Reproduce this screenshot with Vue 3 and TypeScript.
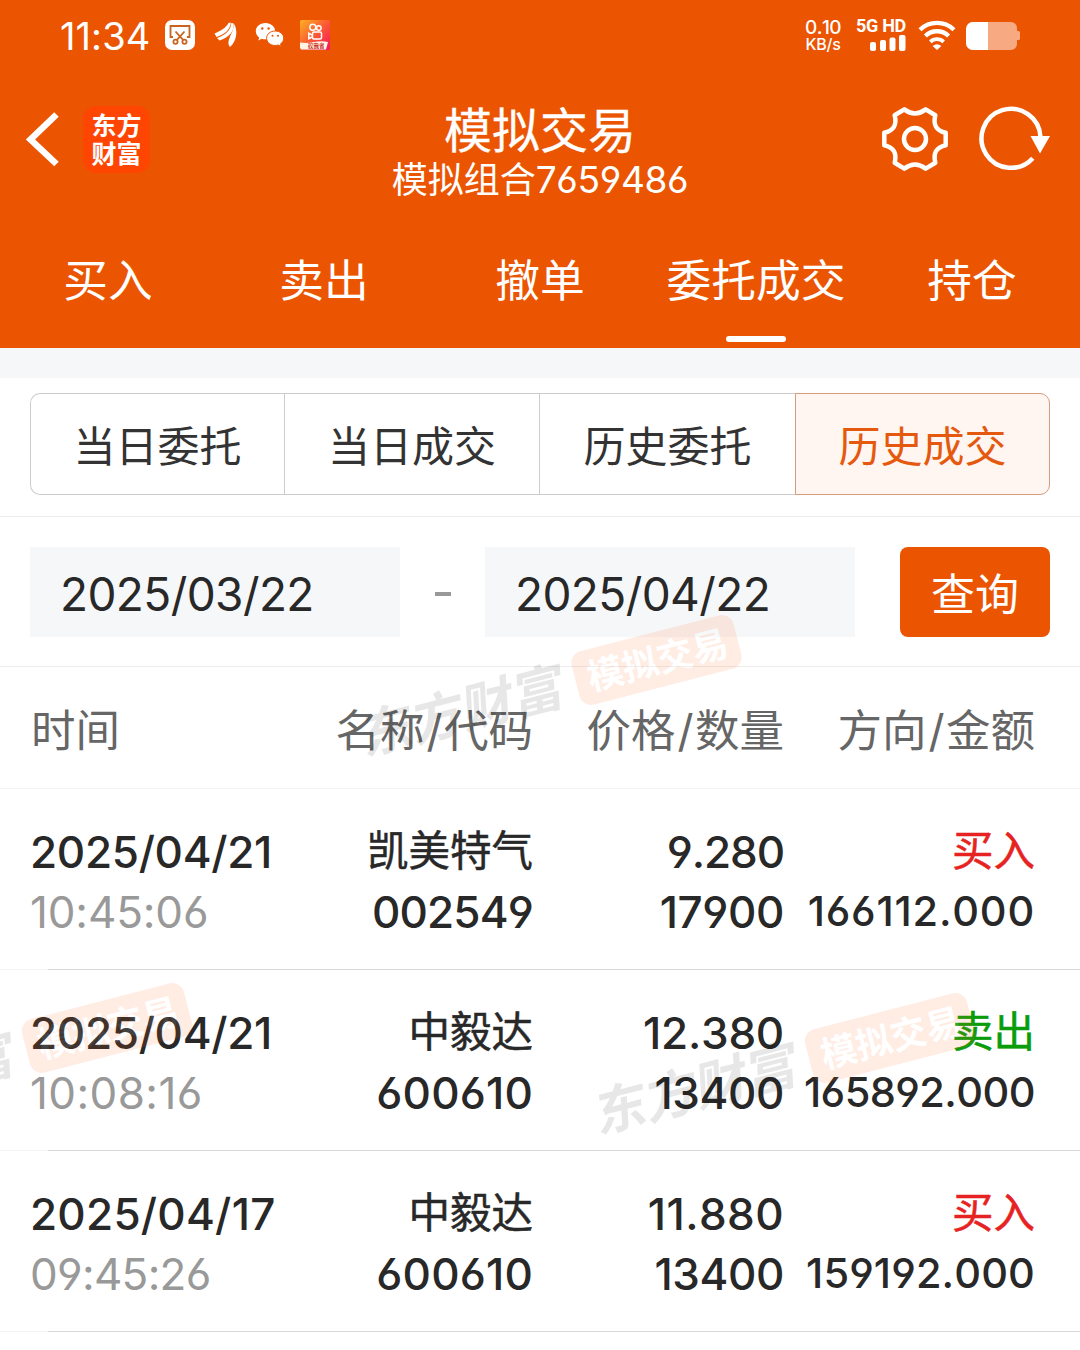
<script setup lang="ts">
interface Trade {
  date: string
  time: string
  name: string
  code: string
  price: string
  count: string
  side: 'buy' | 'sell'
  amount: string
}

interface Mark {
  x: number
  y: number
}

const tabs: string[] = ['买入', '卖出', '撤单', '委托成交', '持仓']
const activeTab = '委托成交'
const segments: string[] = ['当日委托', '当日成交', '历史委托', '历史成交']
const activeSegment = '历史成交'
const columns: string[][] = [['时间'], ['名称', '代码'], ['价格', '数量'], ['方向', '金额']]

const trades: Trade[] = [
  { date: '2025/04/21', time: '10:45:06', name: '凯美特气', code: '002549', price: '9.280', count: '17900', side: 'buy', amount: '166112.000' },
  { date: '2025/04/21', time: '10:08:16', name: '中毅达', code: '600610', price: '12.380', count: '13400', side: 'sell', amount: '165892.000' },
  { date: '2025/04/17', time: '09:45:26', name: '中毅达', code: '600610', price: '11.880', count: '13400', side: 'buy', amount: '159192.000' },
]

const marks: Mark[] = [
  { x: 656.5, y: 660 },
  { x: 107, y: 1028 },
  { x: 890, y: 1038 },
]

function tracking(text: string, base: number, perOne: number, perSeven = 0) {
  const ones = text.split('1').length - 1
  const sevens = text.split('7').length - 1
  const px = (base + perOne * ones + perSeven * sevens) / text.length
  return { letterSpacing: `${px.toFixed(2)}px` }
}
</script>

<template>
  <div class="screen">
    <header class="top">
      <div class="status">
        <span class="clock">11:34</span>
        <svg class="st-shot" width="30" height="30" viewBox="0 0 30 30">
          <rect width="30" height="30" rx="7" fill="#fff" />
          <g fill="none" stroke="#c9641e" stroke-width="1.8">
            <path d="M8 17H5.5V6h19v11H22" />
            <path d="M10.500 11.500l7.600 8.300M19.500 11.500l-7.600 8.300" />
            <circle cx="10.500" cy="21.700" r="2.100" />
            <circle cx="19.500" cy="21.700" r="2.100" />
          </g>
        </svg>
        <svg class="st-wing" width="24" height="26" viewBox="0 0 24 26">
          <g fill="#fff">
            <path d="M.5 11.500C7 8.500 12 6 14.500 1l2.300-.5C16.500 8 10 12.500 2.500 15z" />
            <path d="M3 16C11 13.500 17 8 17.300 1l2.400.5C20.500 10 14.500 15.500 5.500 18.500z" />
            <path d="M16 25C11.500 19 18.500 13 20.300 2 23.500 8 23.500 18.500 16 25z" />
          </g>
        </svg>
        <svg class="st-wechat" width="30" height="26" viewBox="0 0 30 26">
          <path d="M10.500 1C4.700 1 .8 4.700.8 9.200c0 2.500 1.300 4.700 3.400 6.200l-.8 3 3.300-1.700c1.200.4 2.500.6 3.800.6 5.500 0 9.700-3.600 9.700-8.100S16 1 10.500 1z" fill="#fff" />
          <path d="M20.300 9c-5 0-8.700 3.200-8.700 7.200s3.700 7.300 8.700 7.300c1.100 0 2.100-.2 3-.5l2.900 1.500-.7-2.600c1.900-1.300 3.200-3.300 3.200-5.700 0-4-3.700-7.200-8.400-7.200z" fill="#fff" stroke="#eb5502" stroke-width="1" />
          <g fill="#eb5502">
            <circle cx="7.300" cy="6.500" r="1.200" /><circle cx="13.600" cy="6.500" r="1.200" />
            <circle cx="17.500" cy="13.800" r="1" /><circle cx="23" cy="13.800" r="1" />
          </g>
        </svg>
        <svg class="st-kuai" width="30" height="30" viewBox="0 0 30 30">
          <defs>
            <linearGradient id="kg" x1="0" y1="0" x2="1" y2="1">
              <stop offset="0" stop-color="#fdb023" />
              <stop offset=".5" stop-color="#fb5a34" />
              <stop offset="1" stop-color="#f5135f" />
            </linearGradient>
          </defs>
          <rect width="30" height="30" rx="1.500" fill="url(#kg)" />
          <path d="M0 22.500q7 1 14-.5t14 0l-2 7.500H1.500L0 28z" fill="#fff3e4" />
          <g fill="none" stroke="#fff" stroke-width="1.500">
            <circle cx="12.800" cy="7.300" r="3" /><circle cx="18.800" cy="8" r="2.300" />
            <rect x="12.500" y="12" width="9" height="7" rx="1.500" />
            <path d="M12 15l-3.200-1.800v5.500L12 17" />
          </g>
          <text x="8" y="28.200" class="kuai-text">砍我省</text>
        </svg>
        <span class="spacer"></span>
        <span class="speed"><span class="speed-n">0.10</span><span class="speed-u">KB/s</span></span>
        <span class="net">
          <span class="net-t">5G HD</span>
          <svg width="36" height="16" viewBox="0 0 36 16" fill="#fff">
            <rect x="0" y="7" width="6" height="9" rx="2" />
            <rect x="10" y="5" width="6" height="11" rx="2" />
            <rect x="19.500" y="2.500" width="6" height="13.500" rx="2" />
            <rect x="29" y="0" width="6.500" height="16" rx="2" />
          </svg>
        </span>
        <svg class="wifi" width="38" height="30" viewBox="0 0 38 30">
          <g fill="none" stroke="#fff" stroke-width="4.300">
            <path d="M2 9.700a24.500 24.500 0 0 1 34 0" />
            <path d="M7.400 16a16.500 16.500 0 0 1 23.200 0" />
            <path d="M12.300 21.800a9.800 9.800 0 0 1 13.400 0" stroke-width="3.800" />
          </g>
          <path d="M14.600 26q4.400-3.600 8.800 0L19 30z" fill="#fff" />
        </svg>
        <svg class="battery" width="54" height="28" viewBox="0 0 54 28">
          <path d="M7 0h38a6 6 0 0 1 6 6v3h1.500q1.500 0 1.500 1.500v6q0 1.500-1.500 1.500H51v4a6 6 0 0 1-6 6H7a7 7 0 0 1-7-7V7a7 7 0 0 1 7-7z" fill="#f7a981" />
          <path d="M7 0h15v28H7a7 7 0 0 1-7-7V7a7 7 0 0 1 7-7z" fill="#fff" />
        </svg>
      </div>

      <div class="nav">
        <div class="nav-side">
          <svg class="back" width="36" height="58" viewBox="0 0 36 58">
            <path d="M31.500 4.500L5.500 29.500 31.500 54" fill="none" stroke="#fff" stroke-width="6.500" />
          </svg>
          <div class="brand"><span>东方</span><span>财富</span></div>
        </div>
        <div class="titles">
          <div class="title">模拟交易</div>
          <div class="subtitle">模拟组合<span class="num">7659486</span></div>
        </div>
        <div class="nav-side right">
          <svg class="gear" width="66" height="66" viewBox="0 0 66 66" fill="none" stroke="#fff" stroke-width="4.500" stroke-linejoin="round">
            <path d="M22.300 3.400Q33 11.500 43.700 3.400L53.300 9.200C51 19 54 24.500 63.700 26.800V39.200C54 41.500 51 47 53.300 56.800L43.700 62.600Q33 54.500 22.300 62.600L12.700 56.800C15 47 12 41.500 2.300 39.200V26.800C12 24.500 15 19 12.700 9.200Z" />
            <circle cx="33" cy="33" r="11" />
          </svg>
          <svg class="refresh" width="72" height="66" viewBox="0 0 72 66">
            <path d="M53.800 52.200A29.500 29.500 0 1 1 61.500 31" fill="none" stroke="#fff" stroke-width="4.500" />
            <path d="M51.500 30h19.500L61 47.500z" fill="#fff" />
          </svg>
        </div>
      </div>

      <nav class="tabs">
        <div v-for="t in tabs" :key="t" class="tab" :class="{ on: t === activeTab }">{{ t }}</div>
      </nav>
    </header>

    <div class="gap"></div>

    <section class="segment-wrap">
      <div class="segments">
        <div v-for="s in segments" :key="s" class="segment" :class="{ on: s === activeSegment }">{{ s }}</div>
      </div>
    </section>

    <section class="filter">
      <div class="field num">2025/03/22</div>
      <div class="dash"><i></i></div>
      <div class="field num">2025/04/22</div>
      <div class="query">查询</div>
    </section>

    <section class="grid head">
      <div v-for="(c, i) in columns" :key="i" class="cell">
        {{ c[0] }}<template v-if="c[1]"><span class="slash">/</span>{{ c[1] }}</template>
      </div>
    </section>

    <section v-for="(r, i) in trades" :key="i" class="grid row">
      <div class="cell">
        <div class="line num date" :style="tracking(r.date, -7.5, 4.5, 5.5)">{{ r.date }}</div>
        <div class="line num time" :style="tracking(r.time, -5.7, 4.5)">{{ r.time }}</div>
      </div>
      <div class="cell">
        <div class="line cn">{{ r.name }}</div>
        <div class="line num code" :style="tracking(r.code, -5, 6)">{{ r.code }}</div>
      </div>
      <div class="cell">
        <div class="line num price" :style="tracking(r.price, -5.5, 4)">{{ r.price }}</div>
        <div class="line num price" :style="tracking(r.count, -6, 4)">{{ r.count }}</div>
      </div>
      <div class="cell">
        <div class="line cn" :class="r.side">{{ r.side === 'buy' ? '买入' : '卖出' }}</div>
        <div class="line num amount" :style="tracking(r.amount, -12.5, 6.8)">{{ r.amount }}</div>
      </div>
    </section>

    <svg class="marks" width="1080" height="1350" viewBox="0 0 1080 1350">
      <g v-for="(m, i) in marks" :key="i" :transform="`translate(${m.x} ${m.y}) rotate(-14.500)`">
        <g opacity=".12">
          <rect x="-83.500" y="-27.500" width="167" height="55" rx="12" fill="#ff6926" />
          <text class="mark-badge" x="1" y="13.500" text-anchor="middle">模拟交易</text>
        </g>
        <g opacity=".09" transform="translate(-203 19.500) skewX(3)">
          <text class="mark-logo" x="0" y="0" text-anchor="middle">东方财富</text>
        </g>
      </g>
    </svg>
  </div>
</template>

<style>
body {
  margin: 0;
  overflow: hidden;
}
</style>

<style scoped>
.screen {
  position: relative;
  width: 1080px;
  height: 1350px;
  overflow: hidden;
  background: #fff;
  color: #282828;
  font-family: Inter, 'Noto Sans CJK SC', sans-serif;
}
.num {
  font-family: Inter, sans-serif;
  font-feature-settings: 'cv03', 'cv04';
  font-kerning: none;
}
.top {
  height: 348px;
  background: #eb5502;
  color: #fff;
}
.status {
  display: flex;
  align-items: flex-start;
  height: 70px;
  padding: 0 60px 0 60px;
}
.clock {
  width: 105px;
  margin-top: 12px;
  font-size: 38px;
  line-height: 48px;
  font-kerning: none;
  letter-spacing: 0.1px;
}
.st-shot {
  margin-top: 20px;
}
.st-wing {
  margin: 22px 0 0 19px;
}
.st-wechat {
  margin: 22px 0 0 17px;
}
.st-kuai {
  margin: 20px 0 0 15px;
}
.kuai-text {
  font: 700 5.500px 'Noto Sans CJK SC', sans-serif;
  fill: #c62a24;
}
.spacer {
  flex: 1;
}
.speed {
  display: flex;
  flex-direction: column;
  align-items: center;
  width: 38px;
  margin: 18px 14px 0 0;
  font-weight: 500;
}
.speed-n {
  font-size: 19px;
  line-height: 19px;
  font-kerning: none;
  letter-spacing: -0.5px;
}
.speed-u {
  font-size: 16px;
  line-height: 14px;
  letter-spacing: -0.2px;
}
.net {
  display: flex;
  flex-direction: column;
  align-items: flex-end;
  width: 50px;
  margin: 16px 12px 0 0;
}
.net-t {
  width: 50px;
  font: 700 18px/19px Roboto, sans-serif;
  letter-spacing: -0.3px;
  white-space: nowrap;
}
.wifi {
  margin: 20px 10px 0 0;
}
.battery {
  margin-top: 22px;
}
.nav {
  display: flex;
  justify-content: space-between;
  height: 140px;
}
.nav-side {
  display: flex;
  width: 330px;
}
.nav-side.right {
  justify-content: flex-end;
}
.back {
  margin: 40px 0 0 25px;
}
.brand {
  display: flex;
  flex-direction: column;
  align-items: center;
  width: 67px;
  height: 67px;
  margin: 36px 0 0 22px;
  border-radius: 13px;
  background: #ff4502;
  font: 700 25px/28px 'Noto Sans CJK SC', sans-serif;
}
.brand span:first-child {
  margin-top: 4px;
}
.titles {
  text-align: center;
  white-space: nowrap;
}
.title {
  margin-top: 32px;
  font-size: 48px;
  line-height: 57px;
  -webkit-text-stroke: 0.3px currentColor;
}
.subtitle {
  margin-top: 1px;
  font-size: 36px;
  line-height: 40px;
}
.subtitle .num {
  font-size: 37px;
  letter-spacing: -0.3px;
}
.gear {
  margin: 36px 31px 0 0;
}
.refresh {
  margin: 36px 29px 0 0;
}
.tabs {
  display: flex;
  height: 138px;
}
.tab {
  display: flex;
  flex: 1 0 0;
  justify-content: center;
  position: relative;
  height: 138px;
  font-size: 44.700px;
  line-height: 143px;
  white-space: nowrap;
}
.tab.on::after {
  content: '';
  position: absolute;
  bottom: 6px;
  width: 60px;
  height: 6px;
  border-radius: 3px;
  background: #fff;
}
.gap {
  height: 30px;
  background: #f6f7f9;
}
.segment-wrap {
  height: 139px;
  padding: 15px 30px 0;
  box-sizing: border-box;
  border-bottom: 1px solid #ececec;
}
.segments {
  display: grid;
  grid-template-columns: 254px 255px 256px 255px;
  grid-template-rows: 102px;
  height: 102px;
}
.segment {
  box-sizing: border-box;
  height: 102px;
  border: 1px solid #ccc;
  border-right: 0;
  font-size: 42px;
  line-height: 106px;
  text-align: center;
  color: #333;
}
.segment:first-child {
  border-radius: 10px 0 0 10px;
}
.segment.on {
  border: 1px solid #d69a7c;
  border-radius: 0 10px 10px 0;
  background: #fff5f1;
  color: #e5590f;
}
.filter {
  display: flex;
  box-sizing: border-box;
  height: 150px;
  padding: 30px;
  border-bottom: 1px solid #ececec;
}
.field {
  box-sizing: border-box;
  width: 370px;
  height: 90px;
  padding-left: 30px;
  background: #f6f7f9;
  font-size: 46px;
  line-height: 95px;
  letter-spacing: -0.6px;
}
.dash {
  display: flex;
  justify-content: center;
  width: 85px;
}
.dash i {
  width: 16px;
  height: 4px;
  margin-top: 45px;
  background: #999;
}
.query {
  width: 150px;
  height: 90px;
  margin-left: 45px;
  border-radius: 8px;
  background: #eb5502;
  color: #fff;
  font-size: 44px;
  line-height: 97px;
  text-align: center;
}
.grid {
  display: grid;
  grid-template-columns: 242px 260px 251px 251px;
  box-sizing: border-box;
  padding-left: 31px;
}
.cell {
  text-align: right;
  white-space: nowrap;
}
.cell:first-child {
  text-align: left;
}
.head {
  height: 122px;
  border-bottom: 1px solid #f3f3f3;
  color: #666;
  font-size: 44.500px;
  line-height: 128px;
}
.slash {
  margin: 0 1.500px 0 2px;
}
.row {
  position: relative;
  height: 181px;
  padding-top: 33px;
}
.row::after {
  content: '';
  position: absolute;
  right: 0;
  bottom: 0;
  left: 0;
  height: 1px;
  background: linear-gradient(90deg, #f4f4f4 48px, #d8d8d8 48px);
}
.line {
  height: 60px;
  line-height: 60px;
  font-size: 44px;
}
.line.cn {
  font-size: 41.500px;
  line-height: 59px;
  -webkit-text-stroke: 0.5px currentColor;
}
.date,
.code,
.price,
.amount {
  font-weight: 500;
}
.line.date,
.line.time {
  margin-left: -1px;
}
.line.time {
  color: #999;
}
.line.amount {
  font-size: 41.500px;
  line-height: 59px;
}
.buy {
  color: #e62222;
}
.sell {
  color: #0a9c0a;
}
.marks {
  position: absolute;
  top: 0;
  left: 0;
  pointer-events: none;
}
.mark-badge {
  font: 700 36px 'Noto Sans CJK SC', sans-serif;
  fill: #fff;
}
.mark-logo {
  font: italic 700 52px 'Noto Sans CJK SC', sans-serif;
  fill: #000;
}
</style>
